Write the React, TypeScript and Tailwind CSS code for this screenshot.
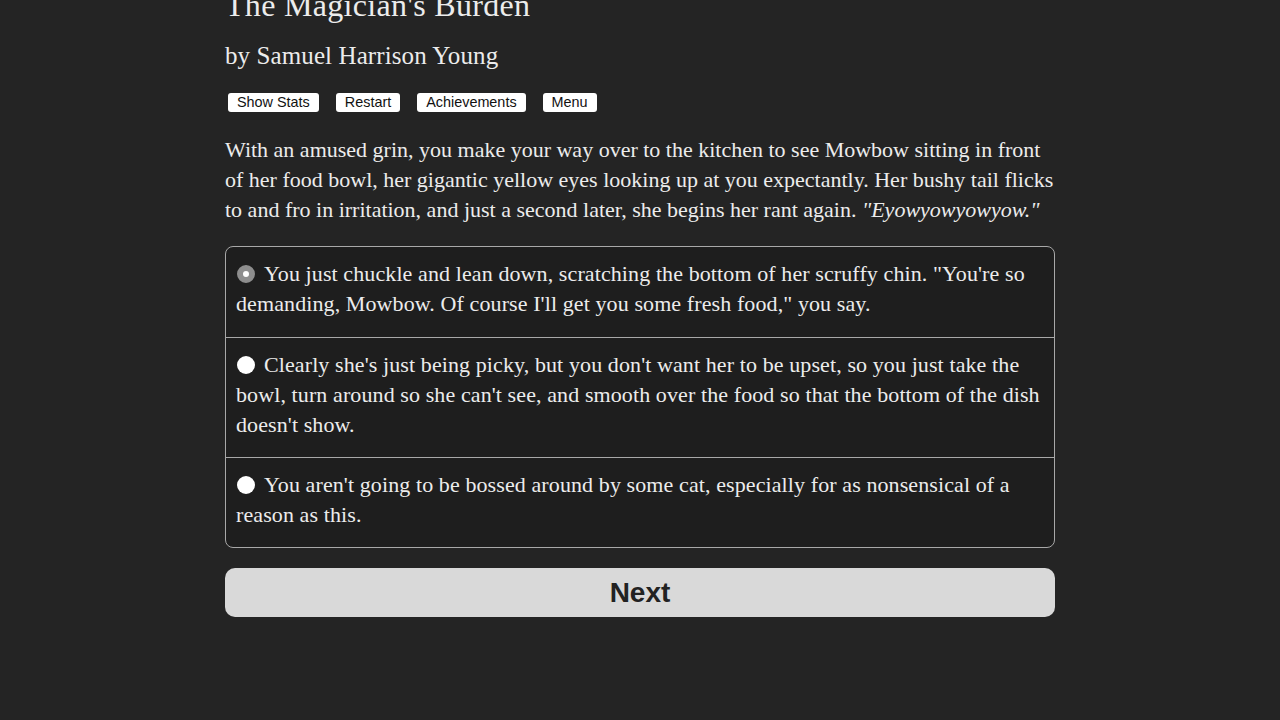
const buttons = ['Show Stats', 'Restart', 'Achievements', 'Menu']

const choices = [
  `You just chuckle and lean down, scratching the bottom of her scruffy chin. "You're so demanding, Mowbow. Of course I'll get you some fresh food," you say.`,
  `Clearly she's just being picky, but you don't want her to be upset, so you just take the bowl, turn around so she can't see, and smooth over the food so that the bottom of the dish doesn't show.`,
  `You aren't going to be bossed around by some cat, especially for as nonsensical of a reason as this.`,
]

function Radio({ checked }: { checked: boolean }) {
  return (
    <span
      className={`mr-[9px] ml-[1px] inline-block h-[18px] w-[18px] translate-y-[2px] rounded-full bg-white align-baseline ${
        checked ? 'border-[6px] border-[#8e8e8e]' : ''
      }`}
    />
  )
}

export default function App() {
  return (
    <div className="min-h-[720px] overflow-hidden bg-[#242424] text-[#ececec]">
      <div className="mx-auto w-[830px] font-['Liberation_Serif',serif]">
        <h1 className="-mt-[13px] text-[32px] leading-[36px] tracking-[0.3px]">The Magician&apos;s Burden</h1>
        <h2 className="mt-[18px] text-[25px] leading-[30px] tracking-[0.1px]">by Samuel Harrison Young</h2>

        <div className="mt-[22px] flex gap-[17px] pl-[3px] font-['Liberation_Sans',sans-serif]">
          {buttons.map((label) => (
            <button
              key={label}
              type="button"
              className="h-[19px] rounded-[3px] bg-white px-[9px] text-[14.4px] leading-[19px] text-[#111]"
            >
              {label}
            </button>
          ))}
        </div>

        <p className="mt-[23px] text-[22px] leading-[30px]">
          With an amused grin, you make your way over to the kitchen to see Mowbow sitting in front of her food
          bowl, her gigantic yellow eyes looking up at you expectantly. Her bushy tail flicks to and fro in
          irritation, and just a second later, she begins her rant again. <i>&quot;Eyowyowyowyow.&quot;</i>
        </p>

        <div className="mt-[21px] overflow-hidden rounded-[8px] border border-[#a8a8a8] bg-[#1e1e1e]">
          {choices.map((text, i) => (
            <label
              key={i}
              className={`block px-[10px] pt-[12px] text-[22px] leading-[30px] tracking-[0.1px] ${
                i > 0 ? 'border-t border-[#a8a8a8] pb-[17px]' : 'pb-[18px]'
              }`}
            >
              <Radio checked={i === 0} />
              {text}
            </label>
          ))}
        </div>

        <button
          type="button"
          className="mt-[20px] h-[49px] w-full rounded-[10px] bg-[#d9d9d9] font-['Liberation_Sans',sans-serif] text-[28px] font-bold text-[#222]"
        >
          Next
        </button>
      </div>
    </div>
  )
}
